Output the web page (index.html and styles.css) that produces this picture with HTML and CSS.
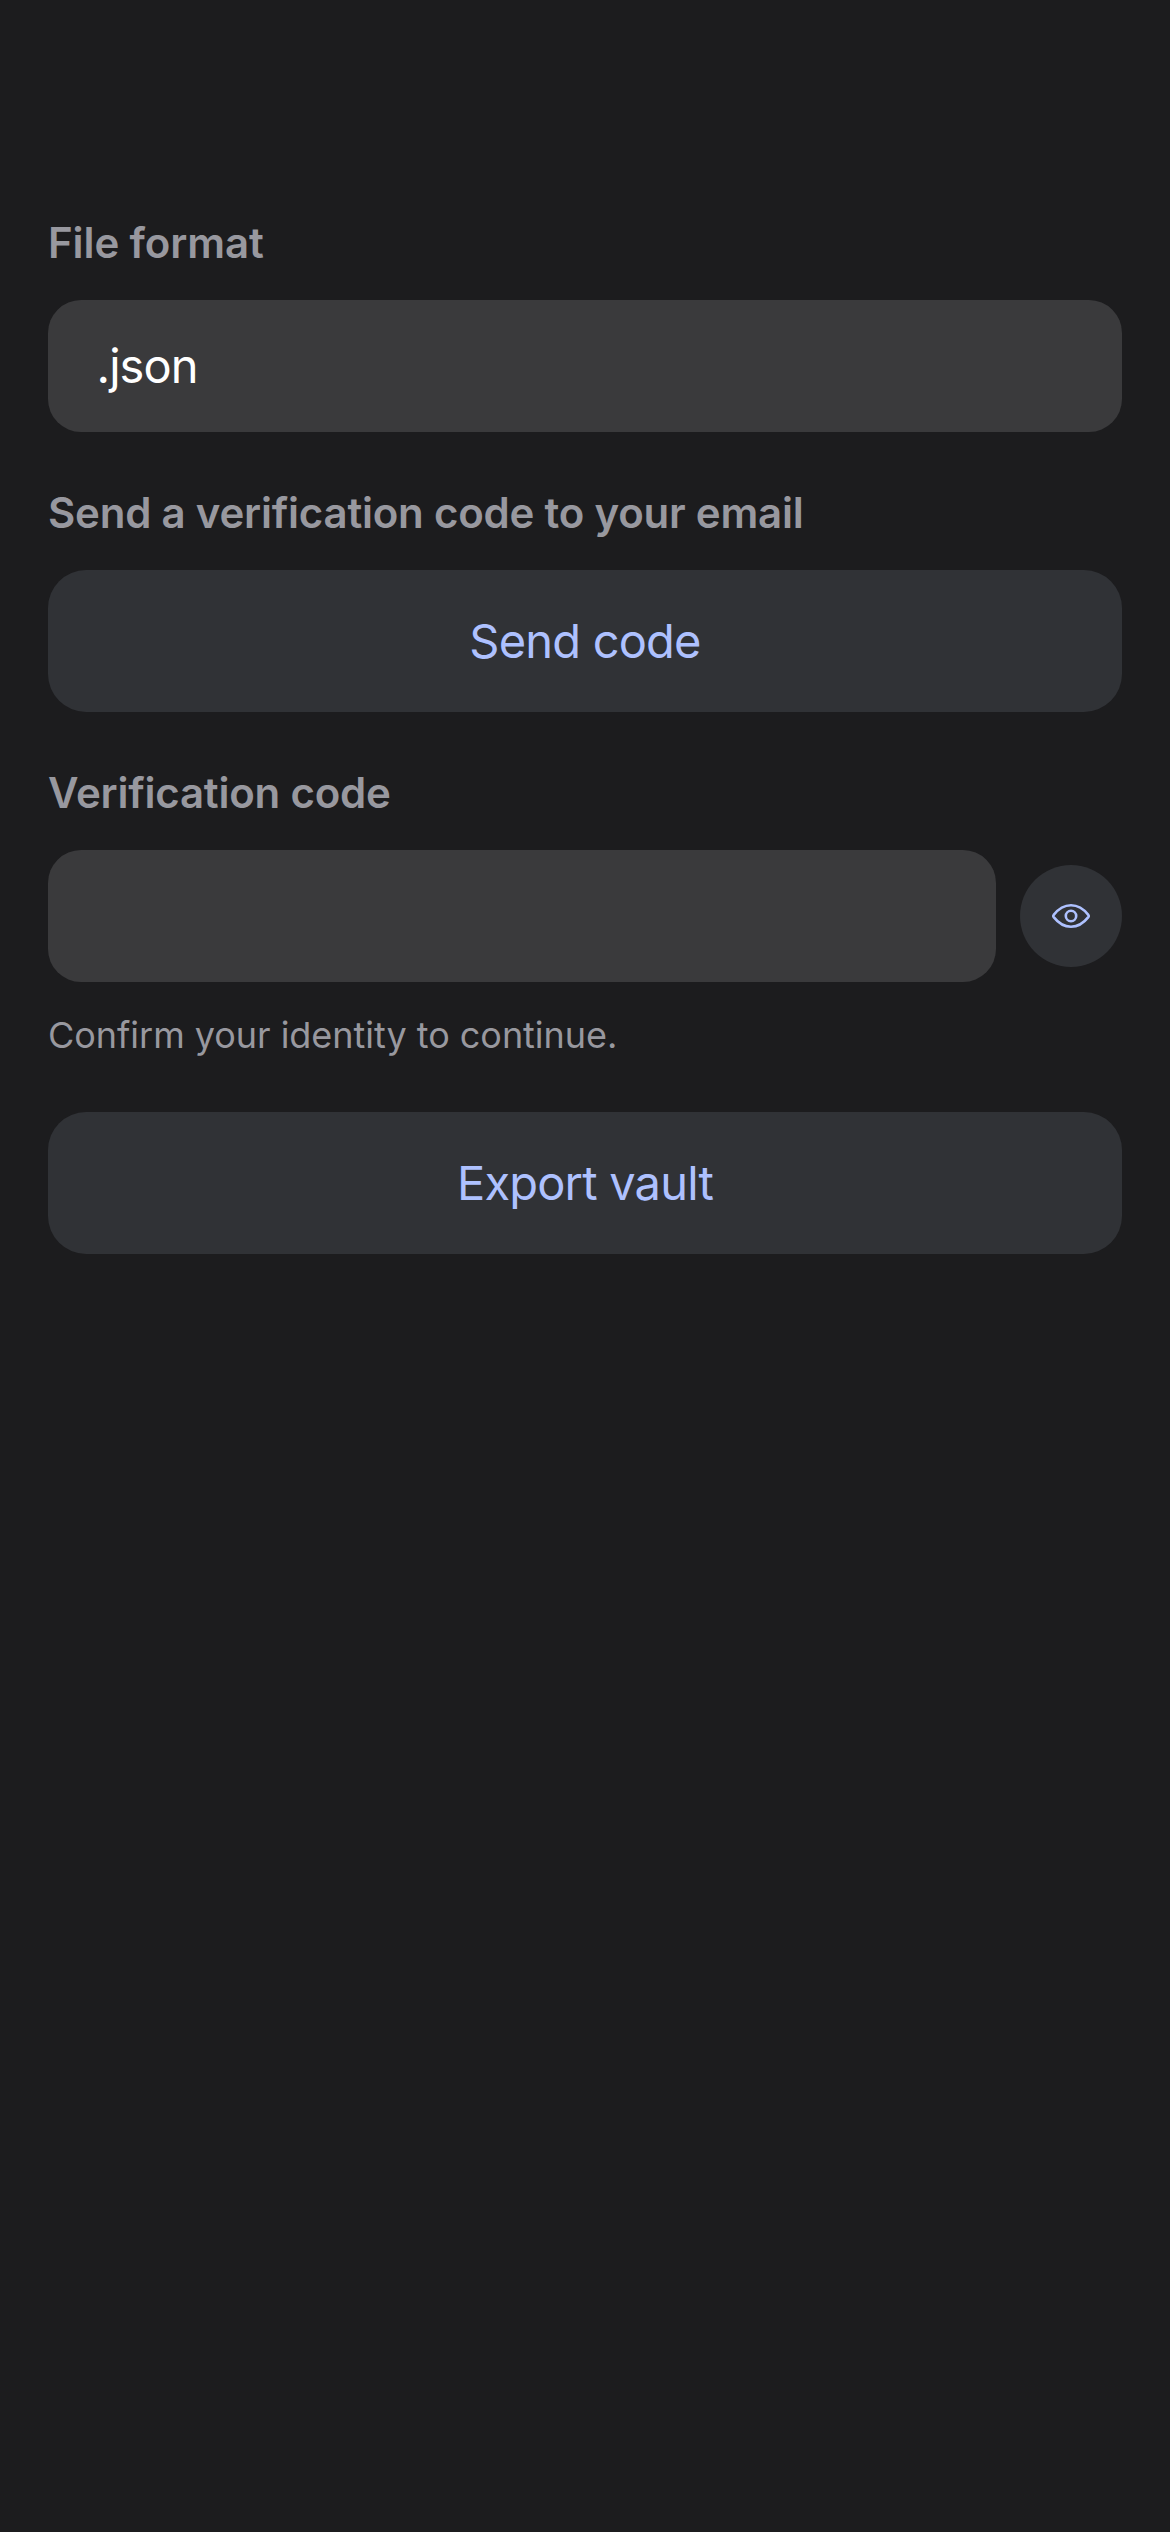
FILE: index.html
```html
<!DOCTYPE html>
<html lang="en">
<head>
<meta charset="utf-8">
<title>Export vault</title>
<link rel="stylesheet" href="styles.css">
</head>
<body>
<main class="screen">
  <section class="group">
    <h2 class="label label-format">File format</h2>
    <div class="field">.json</div>
  </section>
  <section class="group">
    <h2 class="label">Send a verification code to your email</h2>
    <button class="button">Send code</button>
  </section>
  <section class="group">
    <h2 class="label">Verification code</h2>
    <div class="row">
      <div class="field"></div>
      <button class="toggle" aria-label="Show code">
        <svg class="eye" viewBox="0 0 38 24" fill="none" stroke="currentColor" stroke-width="2.6" stroke-linejoin="round">
          <path d="M1.700 10.900C6.500 4.800 12.500 1.300 19 1.300S31.500 4.800 36.300 10.900Q37.100 12 36.300 13.100C31.500 19.200 25.500 22.700 19 22.700S6.500 19.200 1.700 13.100Q.9 12 1.700 10.900Z"/>
          <circle cx="19" cy="12" r="5.200"/>
        </svg>
      </button>
    </div>
    <p class="hint">Confirm your identity to continue.</p>
  </section>
  <button class="button">Export vault</button>
</main>
</body>
</html>
```
FILE: styles.css
```css
* { box-sizing: border-box; }
body {
  margin: 0;
  background: #1c1c1e;
  color: #98989f;
  font-family: Inter, "Liberation Sans", sans-serif;
}
.screen {
  width: 1170px;
  height: 2532px;
  padding: 217px 48px 0;
}
.group + .group { padding-top: 55px; }
.label {
  margin: 0 0 32px;
  height: 51px;
  font-size: 42px;
  line-height: 51px;
  font-weight: 600;
  letter-spacing: -0.22px;
  white-space: nowrap;
}
.label-format { letter-spacing: -0.1px; }
.field {
  flex: 1;
  height: 132px;
  padding-left: 48.5px;
  border-radius: 33px;
  background: #3a3a3c;
  color: #fff;
  font-size: 47px;
  line-height: 132px;
  letter-spacing: -0.9px;
}
.button {
  display: block;
  width: 100%;
  height: 142px;
  padding: 0 0 2px;
  border: 0;
  border-radius: 38px;
  background: #303236;
  color: #aec1ff;
  font: inherit;
  font-size: 47px;
  letter-spacing: -0.8px;
}
.row {
  display: flex;
  align-items: center;
  gap: 24px;
}
.toggle {
  display: grid;
  place-items: center;
  width: 102px;
  height: 102px;
  padding: 0;
  border: 0;
  border-radius: 50%;
  background: #303236;
  color: #aec1ff;
}
.eye { width: 38px; height: 24px; }
.hint {
  margin: 30px 0 54px;
  height: 46px;
  font-size: 36px;
  line-height: 46px;
  letter-spacing: -0.03px;
  white-space: nowrap;
}
```
